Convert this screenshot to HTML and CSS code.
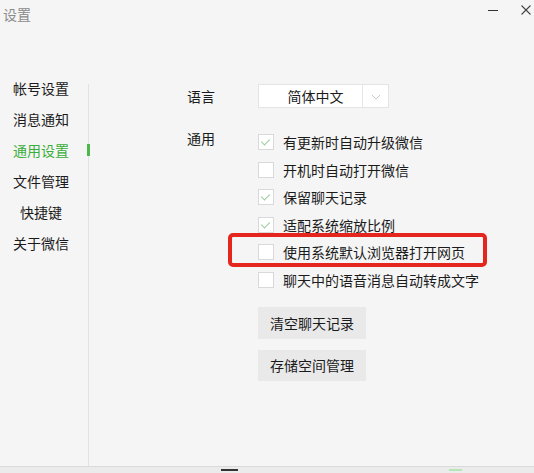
FILE: index.html
```html
<!DOCTYPE html>
<html>
    <head>
        <title>设置</title>
        <link rel="stylesheet" href="styles.css">
    </head>
    <body>
        <header class="titlebar">
            <span class="title">设置</span>
            <div class="winControls">
                <svg class="btnMin" width="12" height="12" viewBox="0 0 12 12">
                    <line x1="1" y1="6.5" x2="11" y2="6.5" stroke="#333" stroke-width="1"/>
                </svg>
                <svg class="btnClose" width="12" height="12" viewBox="0 0 12 12">
                    <line x1="1.5" y1="1.5" x2="10.5" y2="10.5" stroke="#444" stroke-width="1.1"/>
                    <line x1="10.5" y1="1.5" x2="1.5" y2="10.5" stroke="#444" stroke-width="1.1"/>
                </svg>
            </div>
        </header>

        <div class="main">
            <nav class="sidebar">
                <div class="navItem">帐号设置</div>
                <div class="navItem">消息通知</div>
                <div class="navItem active">通用设置</div>
                <div class="navItem">文件管理</div>
                <div class="navItem">快捷键</div>
                <div class="navItem">关于微信</div>
            </nav>
            <div class="rule"></div>

            <section class="content">
                <div class="settingRow">
                    <div class="label labelLang">语言</div>
                    <div class="dropdown">
                        <span class="dropText">简体中文</span>
                        <span class="dropArrow">
                            <svg width="10" height="6" viewBox="0 0 10 6">
                                <polyline points="1,1 5,5 9,1" fill="none" stroke="#c9c9c9" stroke-width="1"/>
                            </svg>
                        </span>
                    </div>
                </div>

                <div class="settingRow general">
                    <div class="label labelGeneral">通用</div>
                    <div class="optionList">
                        <div class="option">
                            <span class="checkbox checked"></span>
                            <span>有更新时自动升级微信</span>
                        </div>
                        <div class="option">
                            <span class="checkbox"></span>
                            <span>开机时自动打开微信</span>
                        </div>
                        <div class="option">
                            <span class="checkbox checked"></span>
                            <span>保留聊天记录</span>
                        </div>
                        <div class="option">
                            <span class="checkbox checked"></span>
                            <span>适配系统缩放比例</span>
                        </div>
                        <div class="option marked">
                            <span class="checkbox"></span>
                            <span>使用系统默认浏览器打开网页</span>
                        </div>
                        <div class="option">
                            <span class="checkbox"></span>
                            <span>聊天中的语音消息自动转成文字</span>
                        </div>

                        <button class="actionBtn firstBtn">清空聊天记录</button>
                        <button class="actionBtn secondBtn">存储空间管理</button>
                    </div>
                </div>
            </section>
        </div>

        <footer class="bottomStrip">
            <span class="mark markDark"></span>
            <span class="mark markGreen"></span>
        </footer>
    </body>
</html>
```

FILE: styles.css
```css
body {
    margin: 0;
    height: 473px;
    background-color: #f5f5f5;
    font-family: "Noto Sans CJK SC", "Microsoft YaHei", sans-serif;
    font-size: 14px;
    color: #1b1b1b;
    display: flex;
    flex-direction: column;
    overflow: hidden;
}

/* Title bar */
.titlebar {
    height: 30px;
    display: flex;
    align-items: flex-start;
}

.title {
    padding: 5px 0 0 3px;
    line-height: 18px;
    color: #8a8a8a;
}

.winControls {
    margin-left: auto;
    display: flex;
    gap: 21px;
    padding: 4px 2px 0 0;
}

/* Main area */
.main {
    flex: 1;
    display: flex;
}

.sidebar {
    width: 82px;
    padding: 43px 6px 0 0;
}

.navItem {
    height: 31px;
    line-height: 31px;
    text-align: center;
    position: relative;
}

.navItem.active {
    color: #3aae3a;
}

.navItem.active::after {
    content: "";
    position: absolute;
    right: -8px;
    top: 9px;
    width: 3px;
    height: 12px;
    background-color: #4cb84c;
}

.rule {
    width: 1px;
    margin-top: 54px;
    background-color: #e2e2e2;
}

.content {
    flex: 1;
    padding: 54px 0 0 98px;
}

.settingRow {
    display: flex;
}

.label {
    width: 71px;
    line-height: 24px;
}

.general {
    margin-top: 26px;
}

.labelGeneral {
    line-height: 16px;
    margin-top: -4px;
}

/* Language dropdown */
.dropdown {
    width: 129px;
    height: 22px;
    background-color: #fff;
    border: 1px solid #e4e4e4;
    display: flex;
    align-items: center;
}

.dropText {
    width: 104px;
    text-align: center;
    line-height: 22px;
    border-right: 1px solid #e6e6e6;
    box-sizing: border-box;
    padding-left: 10px;
}

.dropArrow {
    flex: 1;
    display: flex;
    justify-content: center;
    padding-top: 1px;
}

/* Checkbox options */
.optionList {
    display: flex;
    flex-direction: column;
    gap: 11.5px;
    align-items: flex-start;
}

.option {
    height: 16px;
    display: flex;
    align-items: center;
    gap: 9px;
    line-height: 16px;
    position: relative;
}

.checkbox {
    width: 14px;
    height: 14px;
    background-color: #fff;
    border: 1px solid #d9d9d9;
    display: inline-block;
    position: relative;
}

.checkbox.checked::after {
    content: "";
    position: absolute;
    left: 4px;
    top: 2px;
    width: 4px;
    height: 7px;
    border-right: 1px solid #94c894;
    border-bottom: 1px solid #94c894;
    transform: rotate(45deg);
}

/* red annotation frame */
.option.marked::before {
    content: "";
    position: absolute;
    left: -30px;
    top: -11px;
    width: 251px;
    height: 26px;
    border: 4px solid #e5261f;
    border-radius: 5px;
}

.actionBtn {
    width: 108px;
    border: none;
    background-color: #e9e9e9;
    font-family: inherit;
    font-size: 14px;
    color: #1b1b1b;
    padding: 0;
}

.firstBtn {
    height: 32px;
    margin-top: 8px;
}

.secondBtn {
    height: 31px;
    margin-top: -1px;
}

/* bottom edge */
.bottomStrip {
    height: 6px;
    background-color: #ebebeb;
    border-top: 1px solid #dadada;
    display: flex;
    align-items: center;
}

.mark {
    height: 2px;
}

.markDark {
    width: 17px;
    margin-left: 221px;
    background-color: #333;
}

.markGreen {
    width: 13px;
    margin-left: 211px;
    background-color: #b6e6b6;
}
```
